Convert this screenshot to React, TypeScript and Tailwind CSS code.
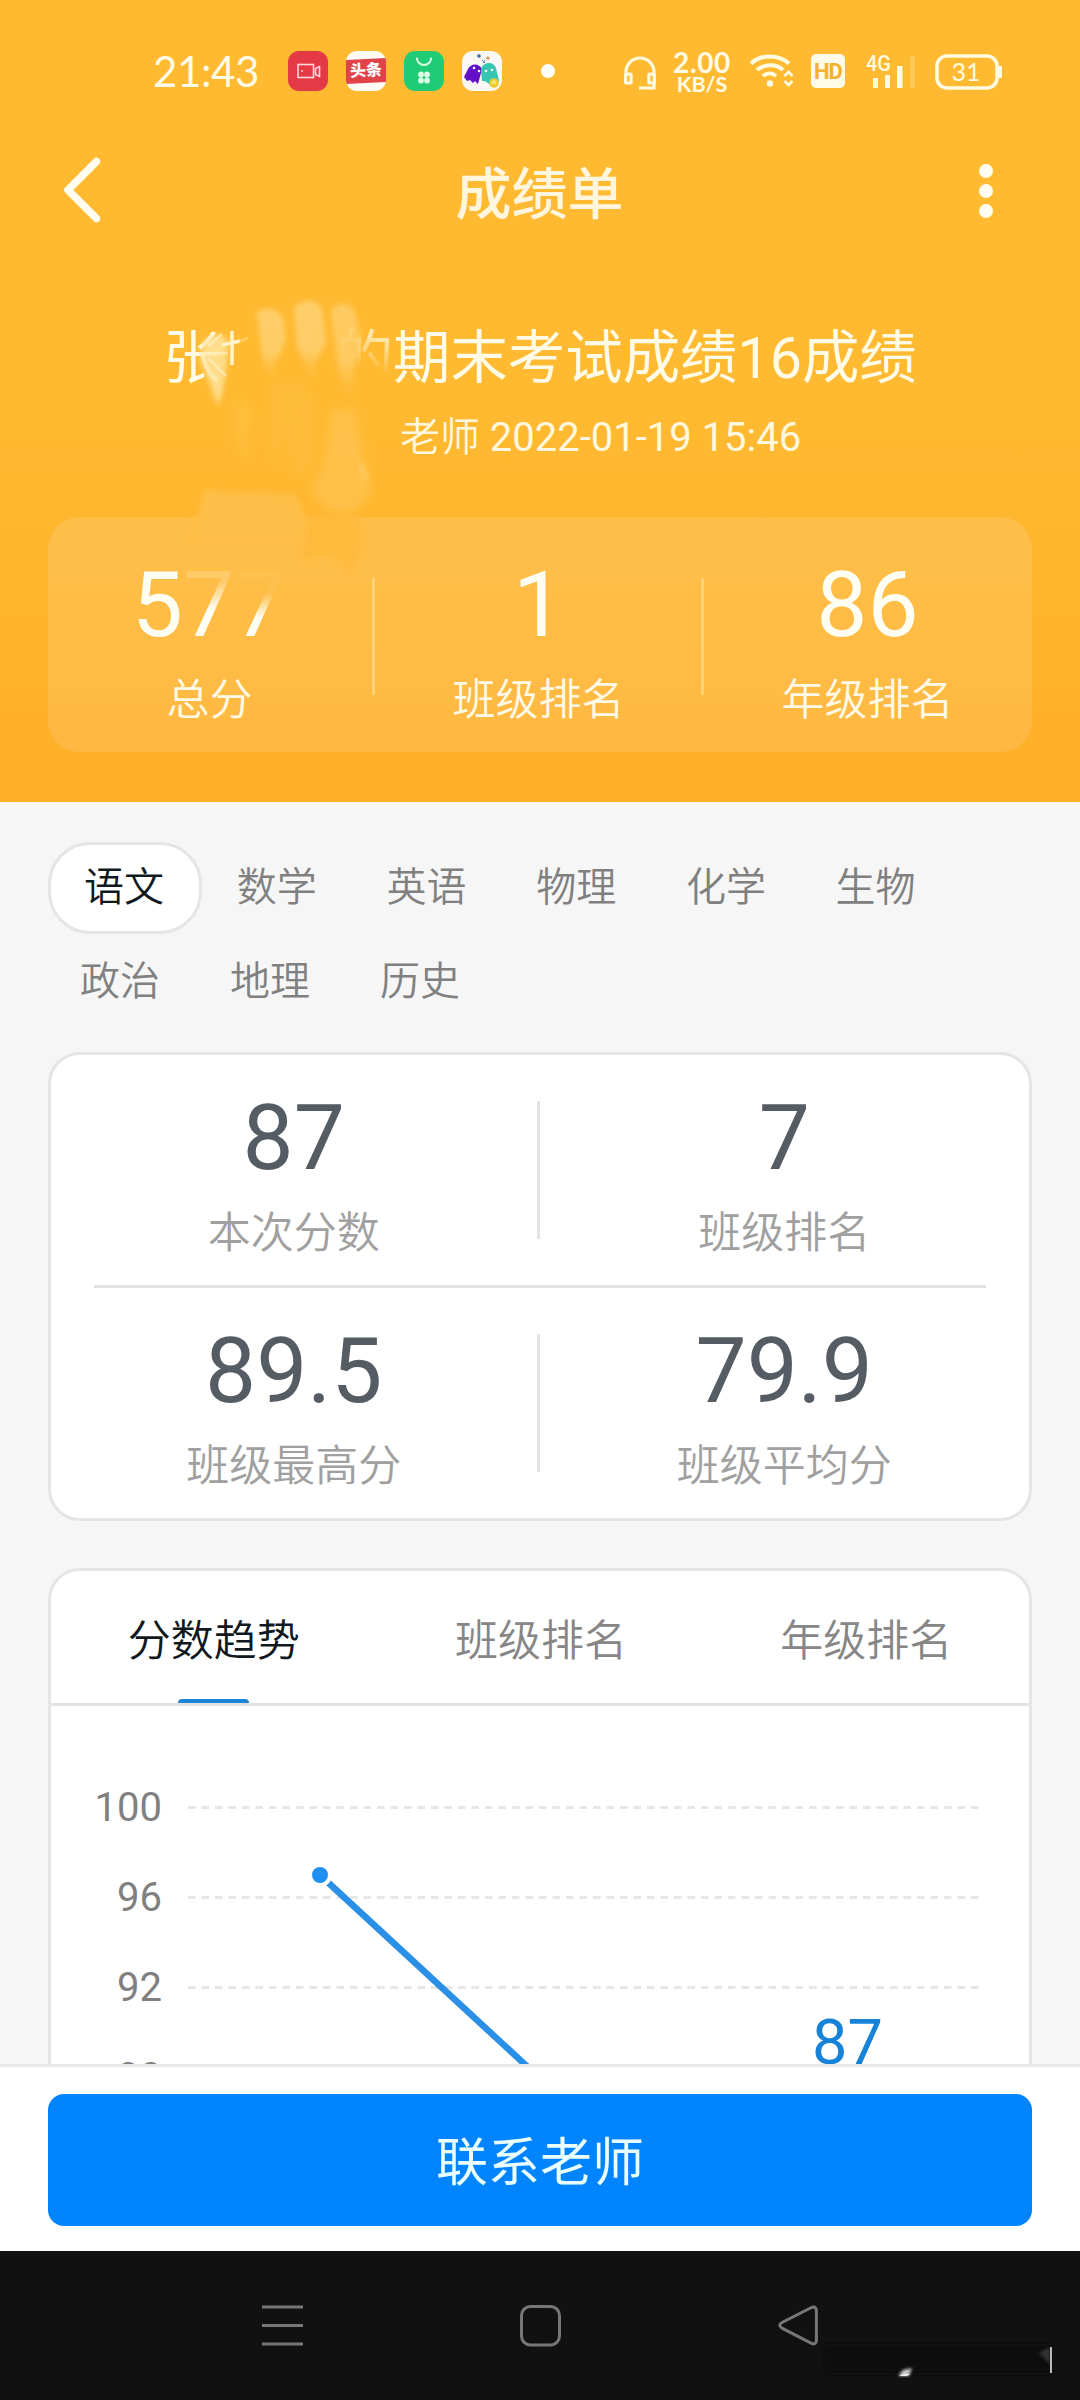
import React from 'react';

const summary = [
  { value: '1', label: '班级排名' },
  { value: '86', label: '年级排名' },
];
const firstRow = ['数学', '英语', '物理', '化学', '生物'];
const secondRow = ['政治', '地理', '历史'];
const detailRows = [
  [
    { value: '87', label: '本次分数' },
    { value: '7', label: '班级排名' },
  ],
  [
    { value: '89.5', label: '班级最高分' },
    { value: '79.9', label: '班级平均分' },
  ],
];
const ticks = [
  { label: '100', y: 101 },
  { label: '96', y: 191 },
  { label: '92', y: 281 },
  { label: '88', y: 371 },
];

function StatusBar() {
  return (
    <div className="flex h-[142px] items-center pl-[153px] text-[#fffbe6]">
      <div className="w-[135px] font-['Lato',sans-serif] text-[42px] leading-[44px] tracking-[-0.4px]">21:43</div>
      <div className="flex gap-[18px]">
        <svg width="40" height="40" viewBox="0 0 40 40">
          <rect width="40" height="40" rx="11" fill="#e53946" />
          <g fill="none" stroke="#ffd9d9" strokeWidth="1.6">
            <rect x="10" y="13.5" width="15.5" height="13" />
            <path d="M27.5 17.5l4-2v10l-4-2z" />
          </g>
          <circle cx="14" cy="20" r="1" fill="#ffd9d9" />
        </svg>
        <div className="flex h-10 w-10 items-center justify-center overflow-hidden rounded-[11px] bg-[#fffdf4]">
          <div className="flex h-[24px] w-11 shrink-0 -rotate-3 items-center justify-center bg-[#e0424a] text-[16px] leading-none font-black whitespace-nowrap text-white">头条</div>
        </div>
        <svg width="40" height="40" viewBox="0 0 40 40">
          <rect width="40" height="40" rx="11" fill="#1fcb75" />
          <path d="M13 7.5a7 6.5 0 0 0 14 0" fill="none" stroke="#e2ffe9" strokeWidth="2" strokeLinecap="round" />
          <g fill="#dcffe6">
            <circle cx="17" cy="23.500" r="2.900" />
            <circle cx="23" cy="23.500" r="2.900" />
            <circle cx="17" cy="29.500" r="2.900" />
            <circle cx="23" cy="29.500" r="2.900" />
          </g>
        </svg>
        <svg width="40" height="40" viewBox="0 0 40 40">
          <rect width="40" height="40" rx="11" fill="#faf8f4" />
          <path d="M6 18c3-6 11-6 14 0l-1 4-3 11-3-3-2 2-3-3-3 1-3-4z" fill="#6410c8" />
          <path d="M19 19c1-8 12-10 15-2l3 13-4 2-3-2-3 3-4-3-3 0z" fill="#35c5b0" />
          <circle cx="32" cy="32" r="4.800" fill="#e9cf2e" />
          <path d="M30 33l2-3 2 3" stroke="#fff6b0" strokeWidth="1.200" fill="none" />
          <g fill="#fff">
            <circle cx="12" cy="17" r="1.300" />
            <circle cx="17" cy="20" r="1.300" />
            <circle cx="24" cy="20" r="1.300" />
            <circle cx="30" cy="19" r="1.300" />
          </g>
          <circle cx="17" cy="5" r="1.800" fill="#3b66a8" />
          <circle cx="26" cy="7" r="1.600" fill="#dd9340" />
          <path d="M20 9l3 3m0-3l-2 3" stroke="#6f7fc0" />
        </svg>
      </div>
      <div className="ml-[39px] size-[14px] rounded-full bg-white" />
      <svg className="mt-1 ml-[68px]" width="34" height="36" viewBox="0 0 34 36" fill="none" stroke="#fffbe0" strokeWidth="3.200">
        <path d="M3 21v-4a14 14 0 0 1 28 0v4" />
        <rect x="2.600" y="19" width="5.500" height="9" rx="1" />
        <rect x="25.900" y="19" width="5.500" height="9" rx="1" />
        <path d="M31 28v5H16" />
      </svg>
      <div className="ml-[13px] flex w-[64px] flex-col items-center font-['Lato',sans-serif] font-bold">
        <span className="text-[28px] leading-[24px] tracking-[0.6px]">2.00</span>
        <span className="mt-px text-[21.5px] leading-[18px] font-bold">KB/S</span>
      </div>
      <svg className="ml-[14px]" width="48" height="40" viewBox="0 0 48 40" fill="none" stroke="#fffbe0" strokeWidth="4">
        <path d="M3 12.500c10-9.500 28-9.500 38 0M9 19c7.500-6.500 19.500-6.500 26 0M15 25c4-3.500 9-3.500 13 0" />
        <circle cx="22" cy="32.500" r="3.200" fill="#fffbe0" stroke="none" />
        <path d="M36.500 25l4-4 4 4M36.500 30l4 4 4-4" strokeWidth="2.800" />
      </svg>
      <div className="ml-[15px] flex h-[34px] w-[34px] items-center justify-center rounded-[5px] bg-[#fffbe6] font-['Roboto',sans-serif] text-[22px] font-bold tracking-[-1px] text-[#f5b032]">HD</div>
      <svg className="ml-[21px]" width="52" height="40" viewBox="0 0 52 40" fill="#fffbe0">
        <text x="0" y="20" fontSize="22" fontFamily="Roboto, sans-serif" fontWeight="500" textLength="25" lengthAdjust="spacingAndGlyphs">4G</text>
        <rect x="7" y="27" width="5" height="10" />
        <rect x="19" y="24" width="5" height="13" />
        <rect x="31" y="15" width="5.500" height="22" />
        <rect x="44" y="5" width="5" height="32" opacity=".22" />
      </svg>
      <svg className="ml-[17px]" width="68" height="40" viewBox="0 0 68 40">
        <rect x="2" y="5" width="60" height="32" rx="10" fill="none" stroke="#fffbe0" strokeWidth="3.600" />
        <rect x="63" y="15" width="4" height="12" rx="1" fill="#fffbe0" />
        <text x="31" y="29.500" textAnchor="middle" fontSize="25" fontFamily="Lato, sans-serif" fill="#fffbe0">31</text>
      </svg>
    </div>
  );
}

function TitleBar() {
  return (
    <div className="flex h-[100px] items-center justify-between pr-[87px] pl-[60px]">
      <svg width="60" height="72" viewBox="0 0 60 72" fill="none" stroke="#fffdf0" strokeWidth="7.500" strokeLinecap="round" strokeLinejoin="round">
        <path d="M36.500 5.500L8 34l28.500 28.500" />
      </svg>
      <h1 className="mt-[6px] ml-[-20px] text-[56px] leading-[60px] font-medium text-[#fff6dd]">成绩单</h1>
      <div className="mb-[2px] flex flex-col gap-[6px]">
        <i className="size-[14px] rounded-full bg-[#fffdf0]" />
        <i className="size-[14px] rounded-full bg-[#fffdf0]" />
        <i className="size-[14px] rounded-full bg-[#fffdf0]" />
      </div>
    </div>
  );
}

/* Brush strokes that hide the student's and the teacher's name. */
function Smudges() {
  return (
    <svg className="absolute top-[290px] left-[160px]" width="260" height="300" viewBox="0 0 260 300">
      <defs>
        <filter id="soft" x="-20%" y="-20%" width="140%" height="140%">
          <feGaussianBlur stdDeviation="2.800" />
        </filter>
        <filter id="softer" x="-20%" y="-20%" width="140%" height="140%">
          <feGaussianBlur stdDeviation="5" />
        </filter>
        <linearGradient id="fade" x1="0" y1="0" x2="0" y2="1">
          <stop offset="0" stopColor="#ffcf6c" />
          <stop offset=".6" stopColor="#ffcd66" />
          <stop offset="1" stopColor="#ffbd3c" stopOpacity="0" />
        </linearGradient>
      </defs>
      <g filter="url(#softer)">
        <path d="M112 96l34 0 6 34 0 50-18 8-10-50-8 40-10-30z" fill="#ffc550" opacity=".25" />
        <path d="M76 113l14 6-2 50-10-12z" fill="#ffc95c" opacity=".3" />
        <path d="M172 120l22 0 10 50 8 30-22 30-14-2-26-26 14-30z" fill="#ffc95c" opacity=".55" />
      </g>
      <g filter="url(#soft)">
        <path d="M42 55c4-10 18-14 26-5l-1 24-4 26-5 16-8-22-10-24z" fill="#ffe39a" opacity=".85" />
        <path d="M97 22c6-6 22-4 26 6l3 22-8 18-6 24-9-20z" fill="url(#fade)" />
        <path d="M134 18c6-9 24-9 28 1l4 33-9 18-5 24-8-22-7-16z" fill="url(#fade)" />
        <path d="M171 20c6-9 20-8 24 3l6 28-6 22-5 40-11-30z" fill="url(#fade)" opacity=".85" />
        <path d="M201 174l5 16" stroke="#ffe09a" strokeWidth="3" opacity=".6" />
        <path d="M36 230l8-30 92 4 10 24v20H30z" fill="#ffbe46" />
        <path d="M149 220h50l2 36-10 24-20-16-28 4z" fill="#ffb836" opacity=".7" />
      </g>
      <g stroke="#fff3c8" fill="none">
        <path d="M72 41v34M62 55l18-4" strokeWidth="3.600" />
        <path d="M48 56l14-12M44 63h24M48 68l18 18" strokeWidth="2.400" opacity=".6" />
        <path d="M80 51l8-3" strokeWidth="2.500" opacity=".35" />
      </g>
    </svg>
  );
}

function Stat({ value, label, tone }: { value: React.ReactNode; label: string; tone: 'light' | 'dark' }) {
  return (
    <div className="flex flex-1 flex-col items-center">
      <div className={tone === 'light' ? 'text-[91px] leading-[94px] text-[#fffef2]' : 'text-[91px] leading-[92px] text-[#555c64]'}>{value}</div>
      <div className={tone === 'light' ? 'mt-[23px] text-[43px] leading-[50px] font-[350] text-[#fff9e6]' : 'mt-[24px] text-[43px] leading-[50px] font-[350] text-[#a0a0a0]'}>{label}</div>
    </div>
  );
}

function Header() {
  return (
    <header className="relative h-[802px] bg-linear-to-b from-[#ffba32] from-50% to-[#ffae28]">
      <StatusBar />
      <TitleBar />
      <div className="mt-[77px] flex h-20 items-center justify-center text-[57.4px] leading-[80px] whitespace-nowrap text-[#fffbe6]">
        <span>张</span>
        <span className="w-[115px]" />
        <span className="[mask-image:linear-gradient(15deg,transparent_40%,rgba(0,0,0,.65)_75%)]">的</span>
        <span>期末考试成绩16成绩</span>
      </div>
      <div className="mt-[14px] pl-[400px] text-[40px] leading-[50px] font-[350] text-[#fff8de]">老师 <span className="font-normal">2022-01-19 15:46</span></div>
      <div className="mx-12 mt-[54px] flex h-[235px] rounded-[32px] bg-white/12 pt-[41px]">
        <div className="-ml-[3px] flex flex-1">
          <Stat
            tone="light"
            label="总分"
            value={
              <div className="ml-[-2px]">
                5<span className="[mask-image:linear-gradient(175deg,rgba(0,0,0,.2)_30%,black_55%)]">7</span>
                <span className="[mask-image:linear-gradient(175deg,rgba(0,0,0,.04)_40%,black_62%)]">7</span>
              </div>
            }
          />
        </div>
        {summary.map((s) => (
          <React.Fragment key={s.label}>
            <div className="-mr-[0.5px] -ml-[2.5px] mt-[20px] h-[117px] w-[3px] bg-[#ffd27a]" />
            <Stat tone="light" value={s.value} label={s.label} />
          </React.Fragment>
        ))}
      </div>
      <Smudges />
    </header>
  );
}

function Subjects() {
  return (
    <div className="pt-10 text-[40px] font-[350] text-[#808080]">
      <div className="ml-12 flex h-[92px]">
        <div className="flex w-[154px] items-center justify-center rounded-[42px] border-[3px] border-[#e5e5e5] bg-white pr-[2px] pb-px text-[#101820]">语文</div>
        {firstRow.map((s) => (
          <div key={s} className="flex w-[149.7px] items-center justify-center">{s}</div>
        ))}
      </div>
      <div className="mt-[2px] ml-[45px] flex h-[92px]">
        {secondRow.map((s) => (
          <div key={s} className="flex w-[150px] items-center justify-center">{s}</div>
        ))}
      </div>
    </div>
  );
}

function Details() {
  return (
    <div className="mx-12 mt-6 h-[469px] rounded-[32px] border-[3px] border-[#e5e5e5] bg-white">
      {detailRows.map((row, i) => (
        <React.Fragment key={i}>
          {i > 0 && <div className="mx-[43px] h-[3px] bg-[#e3e3e3]" />}
          <div className="-ml-[2px] flex h-[230px] pt-[37px]">
            <Stat tone="dark" {...row[0]} />
            <div className="-ml-[2px] mt-[9px] h-[138px] w-[3px] bg-[#e3e3e3]" />
            <Stat tone="dark" {...row[1]} />
          </div>
        </React.Fragment>
      ))}
    </div>
  );
}

function Trend() {
  return (
    <div className="mx-12 mt-[47px] h-[600px] rounded-[32px] border-[3px] border-[#e5e5e5] bg-white">
      <div className="flex h-[135px] border-b-[3px] border-[#e3e3e3] text-[43px] leading-[50px] font-[350] text-[#868686]">
        <div className="flex flex-1 flex-col items-center pt-[45px] pr-[2px] text-[#101820]">
          分数趋势
          <div className="mt-[33px] h-[4px] w-[71px] rounded-t bg-[#1c85d8]" />
        </div>
        <div className="flex-1 pt-[45px] text-center">班级排名</div>
        <div className="flex-1 pt-[45px] text-center">年级排名</div>
      </div>
      <svg className="block" width="978" height="400" viewBox="0 0 978 400">
        {ticks.map((t) => (
          <g key={t.label}>
            <text x="111" y={t.y + 14} textAnchor="end" fontSize="40" fill="#808080" fontFamily="Roboto, sans-serif">{t.label}</text>
            <line x1="137" x2="929" y1={t.y + 0.5} y2={t.y + 0.5} stroke="#e6e6e6" strokeWidth="3" strokeDasharray="7.500 6" />
          </g>
        ))}
        <line x1="269" y1="169" x2="494" y2="377" stroke="#2a8fe6" strokeWidth="6.500" />
        <circle cx="269" cy="169" r="10" fill="#1f8ff0" stroke="#fff" strokeWidth="4" />
        <text x="796.500" y="358" textAnchor="middle" fontSize="63" fill="#1783d8" fontFamily="Roboto, sans-serif">87</text>
      </svg>
    </div>
  );
}

function SystemNav() {
  return (
    <nav className="relative flex h-[149px] items-start bg-[#111] pt-[53px] pl-[261px]">
      <svg width="43" height="44" viewBox="0 0 43 44" stroke="#777" strokeWidth="3">
        <path d="M1 3h41M1 21.500h41M1 40h41" />
      </svg>
      <svg className="ml-[215px]" width="43" height="44" viewBox="0 0 43 44" fill="none" stroke="#777" strokeWidth="3">
        <rect x="2.500" y="2.500" width="38" height="38.500" rx="9" />
      </svg>
      <svg className="ml-[215px]" width="43" height="44" viewBox="0 0 43 44" fill="none" stroke="#777" strokeWidth="3">
        <path d="M34.500 3.500L5 18.500q-4.500 2.800 0 5.600l29.500 15.300q4.500 1.800 4.900-3V6.500q-.4-4.800-4.900-3z" />
      </svg>
      <svg className="absolute top-[88px] left-[815px]" width="250" height="46" viewBox="0 0 250 46">
        <defs>
          <filter id="nav-soft" x="-20%" y="-20%" width="140%" height="140%">
            <feGaussianBlur stdDeviation="1.500" />
          </filter>
        </defs>
        <rect x="10" y="5" width="226" height="31" fill="#0d0d0d" filter="url(#nav-soft)" />
        <path d="M83 37l5-6 9-2-3 8z" fill="#ccc" filter="url(#nav-soft)" />
        <path d="M84 37l4-2h7l-3 2z" fill="#eee" />
        <path d="M224 14l11-6v17z" fill="#333" filter="url(#nav-soft)" />
        <rect x="235" y="8" width="2" height="26" fill="#bbb" />
      </svg>
    </nav>
  );
}

export default function App() {
  return (
    <div lang="zh-CN" className="h-[2400px] w-[1080px] overflow-hidden bg-[#f6f6f6] font-['Roboto','Noto_Sans_CJK_SC',sans-serif]">
      <main className="h-[2064px] overflow-hidden">
        <Header />
        <Subjects />
        <Details />
        <Trend />
      </main>
      <footer className="h-[187px] border-t-[3px] border-[#e8e8e8] bg-white px-12 pt-[27px]">
        <button className="flex h-[132px] w-full items-center justify-center rounded-[16px] bg-[#0084ff] pt-[7px] text-[52px] leading-[60px] text-[#eaffff]">联系老师</button>
      </footer>
      <SystemNav />
    </div>
  );
}
